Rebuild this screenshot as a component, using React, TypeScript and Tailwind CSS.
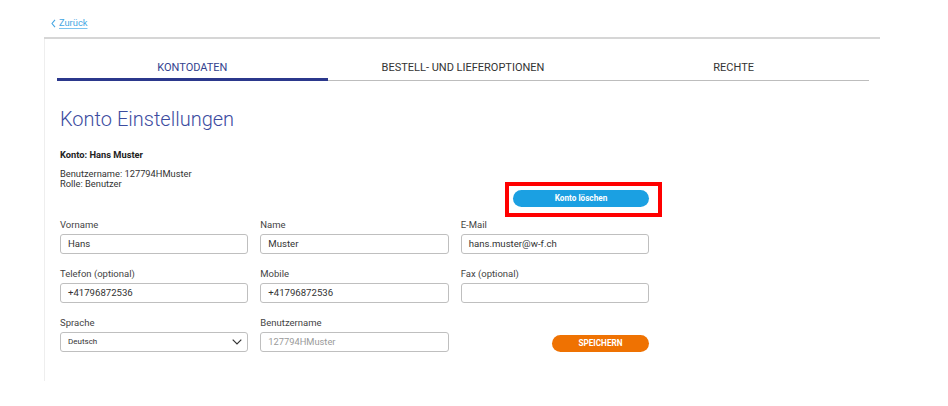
import React from "react";

function Field({ label, value, placeholder }: { label: string; value?: string; placeholder?: string }) {
  return (
    <div className="flex flex-col">
      <div className="text-[9.5px] leading-[12px] text-[#444] mb-[3px]">{label}</div>
      <div className="h-[20px] border border-[#bfbfbf] rounded-[3px] px-[7px] flex items-center text-[9.6px] text-[#333] bg-white">
        {value ? value : <span className="text-[#9a9a9a] text-[9.3px]">{placeholder}</span>}
      </div>
    </div>
  );
}

export default function App() {
  return (
    <div className="w-[948px] h-[406px] bg-white font-['Roboto',sans-serif] text-[#333]">
      <div className="ml-[44px] w-[836px]">
        <div className="h-[37px] pl-[7px] pt-[17px] flex items-start">
          <a className="flex items-center gap-[3px] text-[9.3px] leading-[12px] text-[#45a6e3]">
            <svg width="5" height="9" viewBox="0 0 5 9" fill="none">
              <path d="M4 0.8 L1 4.5 L4 8.2" stroke="#45a6e3" strokeWidth="1.1" />
            </svg>
            <span className="underline decoration-[#7cc4ef] underline-offset-[2px]">Zurück</span>
          </a>
        </div>
        <div className="h-[2px] bg-[#d6d6d6]" />
        <div className="border-l border-[#eeeeee] h-[342px] pl-[12px] pt-[22px]">
          <div className="flex w-[812px]">
            <div className="flex-1 text-center text-[11px] leading-[14px] pb-[3px] text-[#34428f] border-b-[3px] border-[#2b388c]">
              KONTODATEN
            </div>
            <div className="flex-1 text-center text-[11px] leading-[14px] pb-[5px] text-[#333] border-b border-[#bdbdbd]">
              BESTELL- UND LIEFEROPTIONEN
            </div>
            <div className="flex-1 text-center text-[11px] leading-[14px] pb-[5px] text-[#333] border-b border-[#bdbdbd]">
              RECHTE
            </div>
          </div>

          <div className="pl-[3px] w-[592px]">
            <h1 className="mt-[26px] text-[20px] leading-[25px] font-light text-[#3c4c9f]">Konto Einstellungen</h1>
            <div className="mt-[17px] text-[9.3px] leading-[12px] font-bold text-[#222]">Konto: Hans Muster</div>
            <div className="mt-[8px] text-[9.3px] leading-[10px] text-[#333]">
              <div>Benutzername: 127794HMuster</div>
              <div>Rolle: Benutzer</div>
            </div>
            <div className="mt-[1px] flex justify-end w-[589px]">
              <div className="relative">
                <button className="block w-[136px] h-[17px] rounded-full bg-[#1ba0e2] text-white text-[8.2px] font-bold leading-[17px]">
                  Konto löschen
                </button>
                <div className="absolute left-[-8px] top-[-8px] w-[157px] h-[35px] border-4 border-[#ff0000] pointer-events-none" />
              </div>
            </div>

            <div className="mt-[12px] grid grid-cols-3 gap-x-[12px] gap-y-[14px] w-[589px]">
              <Field label="Vorname" value="Hans" />
              <Field label="Name" value="Muster" />
              <Field label="E-Mail" value="hans.muster@w-f.ch" />
              <Field label="Telefon (optional)" value="+41796872536" />
              <Field label="Mobile" value="+41796872536" />
              <Field label="Fax (optional)" value="" placeholder="" />
              <div className="flex flex-col">
                <div className="text-[9.5px] leading-[12px] text-[#444] mb-[3px]">Sprache</div>
                <div className="h-[20px] border border-[#bfbfbf] rounded-[3px] pl-[7px] pr-[5px] flex items-center justify-between text-[8px] text-[#333]">
                  <span>Deutsch</span>
                  <svg width="10" height="6" viewBox="0 0 10 6" fill="none">
                    <path d="M0.7 0.7 L5 5 L9.3 0.7" stroke="#333" strokeWidth="1.2" />
                  </svg>
                </div>
              </div>
              <Field label="Benutzername" placeholder="127794HMuster" />
              <div className="flex items-end justify-end">
                <button className="block w-[97px] h-[17px] rounded-full bg-[#ef7202] text-white text-[8.2px] font-bold leading-[17px]">
                  SPEICHERN
                </button>
              </div>
            </div>
          </div>
        </div>
      </div>
    </div>
  );
}
